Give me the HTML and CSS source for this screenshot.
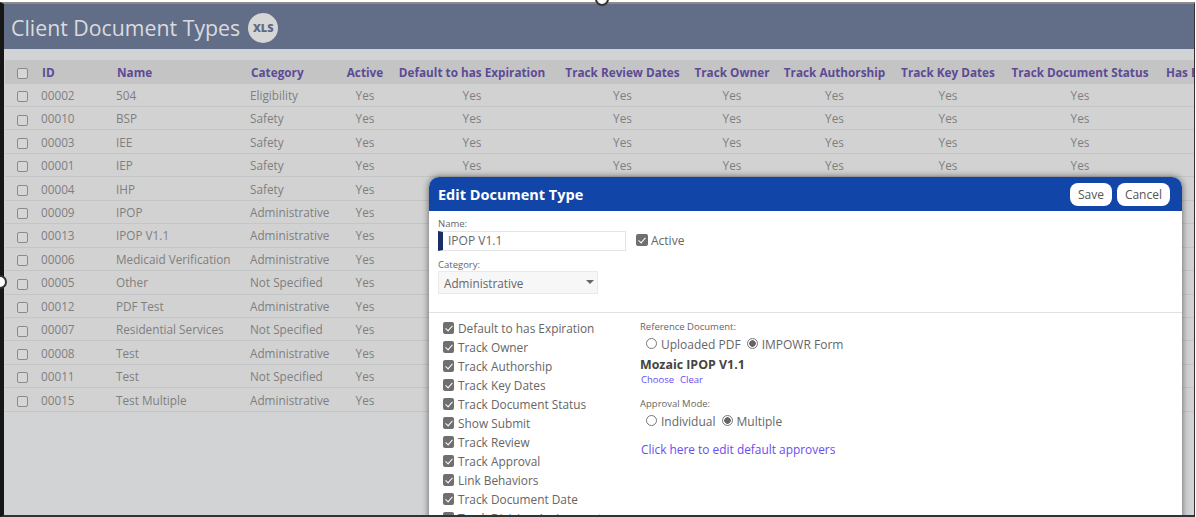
FILE: index.html
```html
<!DOCTYPE html>
<html lang="en">
  <head>
    <meta charset="utf-8">
    <title>Client Document Types</title>
    <link rel="stylesheet" href="styles.css">
  </head>
  <body>
    <div class="frame">
      <header class="pageHeader">
        <h1>Client Document Types</h1>
        <span class="xlsBadge">XLS</span>
      </header>

      <table class="docTable">
        <colgroup>
          <col class="colCheck"><col class="colId"><col class="colName"><col class="colCategory">
          <col class="colActive"><col class="colExpiration"><col class="colReview"><col class="colOwner">
          <col class="colAuthorship"><col class="colKeyDates"><col class="colStatus"><col class="colHas">
        </colgroup>
        <thead>
          <tr>
            <th class="checkCell"><span class="box"></span></th>
            <th class="left">ID</th>
            <th class="left">Name</th>
            <th class="left">Category</th>
            <th>Active</th>
            <th>Default to has Expiration</th>
            <th>Track Review Dates</th>
            <th>Track Owner</th>
            <th>Track Authorship</th>
            <th>Track Key Dates</th>
            <th>Track Document Status</th>
            <th class="lastHead">Has E</th>
          </tr>
        </thead>
        <tbody id="rows"></tbody>
      </table>

      <section class="modal">
        <div class="modalHead">
          <h2>Edit Document Type</h2>
          <div class="modalButtons">
            <button class="pill">Save</button>
            <button class="pill">Cancel</button>
          </div>
        </div>

        <div class="modalTop">
          <label class="smallLabel">Name:</label>
          <div class="nameRow">
            <div class="nameInput">IPOP V1.1</div>
            <span class="check"></span>
            <span>Active</span>
          </div>
          <label class="smallLabel categoryLabel">Category:</label>
          <div class="selectBox">Administrative<span class="caret"></span></div>
        </div>

        <div class="modalBody">
          <ul class="checkList">
            <li><span class="check"></span>Default to has Expiration</li>
            <li><span class="check"></span>Track Owner</li>
            <li><span class="check"></span>Track Authorship</li>
            <li><span class="check"></span>Track Key Dates</li>
            <li><span class="check"></span>Track Document Status</li>
            <li><span class="check"></span>Show Submit</li>
            <li><span class="check"></span>Track Review</li>
            <li><span class="check"></span>Track Approval</li>
            <li><span class="check"></span>Link Behaviors</li>
            <li><span class="check"></span>Track Document Date</li>
            <li><span class="check"></span>Track Division Assignment</li>
          </ul>

          <div class="refColumn">
            <label class="smallLabel">Reference Document:</label>
            <div class="radioRow">
              <span class="radio"></span><span class="radioText">Uploaded PDF</span>
              <span class="radio on"></span><span>IMPOWR Form</span>
            </div>
            <div class="formName">Mozaic IPOP V1.1</div>
            <div class="miniLinks"><a href="#">Choose</a><a href="#">Clear</a></div>
            <label class="smallLabel approvalLabel">Approval Mode:</label>
            <div class="radioRow">
              <span class="radio"></span><span class="radioText">Individual</span>
              <span class="radio on"></span><span>Multiple</span>
            </div>
            <a class="approvers" href="#">Click here to edit default approvers</a>
          </div>
        </div>
      </section>
    </div>

    <span class="handle handleTop"></span>
    <span class="handle handleLeft"></span>

    <script>
      var docs = [
        ["00002", "504", "Eligibility"],
        ["00010", "BSP", "Safety"],
        ["00003", "IEE", "Safety"],
        ["00001", "IEP", "Safety"],
        ["00004", "IHP", "Safety"],
        ["00009", "IPOP", "Administrative"],
        ["00013", "IPOP V1.1", "Administrative"],
        ["00006", "Medicaid Verification", "Administrative"],
        ["00005", "Other", "Not Specified"],
        ["00012", "PDF Test", "Administrative"],
        ["00007", "Residential Services", "Not Specified"],
        ["00008", "Test", "Administrative"],
        ["00011", "Test", "Not Specified"],
        ["00015", "Test Multiple", "Administrative"]
      ];
      var html = "";
      for (var i = 0; i < docs.length; i++) {
        html += '<tr><td class="checkCell"><span class="box"></span></td>';
        html += '<td class="left">' + docs[i][0] + '</td>';
        html += '<td class="left">' + docs[i][1] + '</td>';
        html += '<td class="left">' + docs[i][2] + '</td>';
        for (var j = 0; j < 7; j++) {
          html += '<td>Yes</td>';
        }
        html += '<td></td></tr>';
      }
      document.getElementById("rows").innerHTML = html;
    </script>
  </body>
</html>
```

FILE: styles.css
```css
html, body {
  margin: 0;
  height: 100%;
  background: #fff;
  overflow: hidden;
}

body {
  position: relative;
  font-family: "Open Sans", "Noto Sans", sans-serif;
  font-size: 12px;
  color: #666;
}

.frame {
  position: relative;
  box-sizing: border-box;
  width: 1195px;
  height: 515px;
  margin-top: 2px;
  border-top: 2px solid #8b8b8b;
  border-left: 4px solid #161616;
  border-right: 1px solid #333;
  border-bottom: 2px solid #333;
  background: #d2d3d5;
  overflow: hidden;
}

.handle {
  position: absolute;
  box-sizing: border-box;
  width: 14px;
  height: 14px;
  border: 2px solid #333;
  border-radius: 50%;
  background: #fff;
}

.handleTop { top: -8px; left: 595px; }
.handleLeft { top: 275px; left: -7px; }

.pageHeader {
  display: flex;
  align-items: center;
  gap: 8px;
  height: 45px;
  padding: 2px 0 0 7px;
  box-sizing: border-box;
  background: #626e87;
}

.pageHeader h1 {
  margin: 0;
  font-size: 21.3px;
  font-weight: 400;
  color: #d9dbdf;
}

.xlsBadge {
  width: 30px;
  height: 30px;
  border-radius: 50%;
  background: #d6d6d6;
  color: #5f6a80;
  font-size: 11px;
  font-weight: 800;
  line-height: 30px;
  text-align: center;
}

.docTable {
  width: 1189px;
  margin: 11px 0 0 1px;
  border-collapse: collapse;
  table-layout: fixed;
}

.colCheck { width: 33px; }
.colId { width: 75px; }
.colName { width: 134px; }
.colCategory { width: 96px; }
.colActive { width: 44px; }
.colExpiration { width: 170px; }
.colReview { width: 131px; }
.colOwner { width: 88px; }
.colAuthorship { width: 117px; }
.colKeyDates { width: 110px; }
.colStatus { width: 154px; }
.colHas { width: 37px; }

.docTable th {
  height: 23.6px;
  padding: 0;
  background: #c4c4c4;
  color: #5d4a96;
  font-size: 11.75px;
  font-weight: 700;
  white-space: nowrap;
}

.docTable th.lastHead {
  padding-left: 9px;
  text-align: left;
}

.docTable td {
  height: 22.45px;
  padding: 0;
  border-bottom: 1px solid #c3c5c7;
  background: #d2d2d2;
  color: #7f7f7f;
  font-size: 11.75px;
  text-align: center;
  white-space: nowrap;
}

.docTable .left {
  padding-left: 4px;
  text-align: left;
}

.docTable td.left {
  padding-left: 3px;
}

.docTable .checkCell {
  padding-left: 2px;
}

.box {
  display: inline-block;
  box-sizing: border-box;
  width: 11px;
  height: 11px;
  border: 1px solid #8a8a8a;
  border-radius: 2px;
  background: #d6d6d6;
  vertical-align: middle;
}

.modal {
  position: absolute;
  top: 173px;
  left: 425px;
  width: 753px;
  height: 345px;
  border-radius: 10px 10px 0 0;
  background: #fff;
  box-shadow: 0 0 7px rgba(0, 0, 0, 0.55);
  overflow: hidden;
}

.modalHead {
  display: flex;
  align-items: center;
  justify-content: space-between;
  height: 34px;
  padding: 0 12px 0 9px;
  background: #1146a8;
}

.modalHead h2 {
  margin: 0;
  font-size: 14.5px;
  font-weight: 700;
  color: #fff;
}

.modalButtons {
  display: flex;
  gap: 5px;
}

.pill {
  height: 23px;
  padding: 0 8px;
  border: 0;
  border-radius: 8px;
  background: #fff;
  color: #555;
  font-family: inherit;
  font-size: 12px;
}

.modalTop {
  height: 102px;
  box-sizing: border-box;
  padding: 6px 9px 0;
  border-bottom: 1px solid #e2e2e2;
}

.smallLabel {
  display: block;
  font-size: 9.5px;
  line-height: 13px;
  color: #666;
}

.nameRow {
  display: flex;
  align-items: center;
  margin-top: 1px;
}

.nameRow .check,
.nameRow span {
  margin-top: -2px;
}

.nameInput {
  box-sizing: border-box;
  width: 188px;
  height: 20px;
  margin-right: 10px;
  padding-left: 5px;
  border: 1px solid #e4e4e4;
  border-left: 5px solid #1a2f63;
  line-height: 18px;
}

.nameRow .check {
  margin-right: 3px;
}

.categoryLabel {
  margin-top: 7px;
}

.selectBox {
  position: relative;
  box-sizing: border-box;
  width: 160px;
  height: 23px;
  padding-left: 5px;
  border: 1px solid #eaeaea;
  background: #f7f7f7;
  font-size: 11.75px;
  line-height: 23px;
}

.caret {
  position: absolute;
  top: 8px;
  right: 3px;
  border-left: 4px solid transparent;
  border-right: 4px solid transparent;
  border-top: 4px solid #666;
}

.modalBody {
  display: flex;
  padding: 5px 14px 0;
}

.checkList {
  width: 197px;
  margin: 0;
  padding: 0;
  font-size: 11.85px;
  list-style: none;
}

.checkList li {
  display: flex;
  align-items: center;
  height: 19px;
  white-space: nowrap;
}

.checkList .check {
  width: 11px;
  margin-right: 4px;
}

.check {
  position: relative;
  display: inline-block;
  flex: none;
  width: 12px;
  height: 12px;
  border-radius: 2px;
  background: #6f6f6f;
}

.check::after {
  content: "";
  position: absolute;
  top: 2px;
  left: 4px;
  width: 3px;
  height: 6px;
  border: solid #fff;
  border-width: 0 1.5px 1.5px 0;
  transform: rotate(42deg);
}

.refColumn {
  padding-top: 2px;
}

.radioRow {
  display: flex;
  align-items: center;
  height: 20px;
  margin-top: 1px;
  padding-left: 6px;
}

.radio {
  box-sizing: border-box;
  width: 11px;
  height: 11px;
  margin: -2px 4px 0 0;
  border: 1px solid #777;
  border-radius: 50%;
  background: #fff;
}

.radio.on {
  background: radial-gradient(circle, #666 0, #666 3px, #fff 3.5px);
}

.radioText {
  margin-right: 6px;
}

.formName {
  margin-top: 2px;
  color: #444;
  font-size: 12.4px;
  font-weight: 700;
  line-height: 17px;
}

.miniLinks {
  display: flex;
  gap: 6px;
  padding-left: 1px;
  font-size: 9.5px;
  line-height: 13px;
}

a {
  color: #6a4df0;
  text-decoration: none;
}

.approvalLabel {
  margin-top: 11px;
}

.approvers {
  display: block;
  margin-top: 10px;
  padding-left: 1px;
  font-size: 11.9px;
  line-height: 17px;
}
```
